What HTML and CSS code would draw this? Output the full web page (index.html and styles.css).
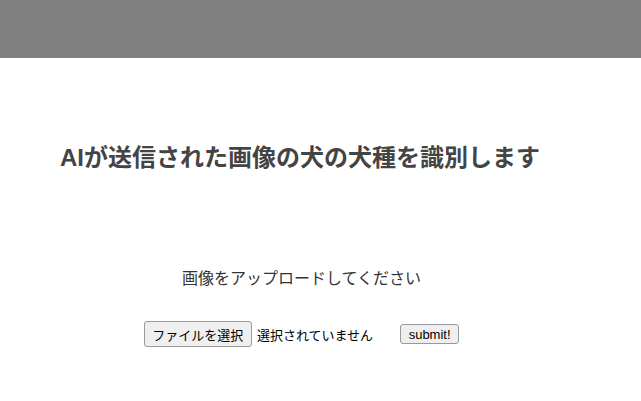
FILE: index.html
```html
<!DOCTYPE html>
<html lang="ja">
<head>
    <meta charset="utf-8">
    <link rel="stylesheet" href="styles.css">
    <title>犬種識別</title>
</head>
<body>
<div class="header"></div>
<div class="main">
    <h1 class="title">AIが送信された画像の犬の犬種を識別します</h1>
    <p class="lead">画像をアップロードしてください</p>
    <form class="upload-form" onsubmit="return false">
        <label class="file-pick">
            <span class="file-button">ファイルを選択</span>
            <span class="file-name">選択されていません</span>
        </label>
        <button class="submit-button" type="submit">submit!</button>
    </form>
</div>
</body>
</html>
```

FILE: styles.css
```css
body {
  margin: 0;
  font-family: "Liberation Sans", "Noto Sans CJK JP", sans-serif;
  background-color: #ffffff;
}

.header {
  height: 58px;
  background-color: #808080;
}

.main {
  margin-left: 60px;
  width: 483px;
  text-align: center;
}

.title {
  margin: 85px 0 0 0;
  font-size: 24px;
  line-height: 30px;
  font-weight: bold;
  color: #444444;
  text-align: left;
  white-space: nowrap;
}

.lead {
  margin: 94px 0 0 0;
  font-size: 16px;
  line-height: 24px;
  color: #333333;
}

.upload-form {
  margin-top: 30px;
  display: flex;
  justify-content: center;
  align-items: center;
}

.file-pick {
  display: flex;
  align-items: center;
}

.file-button {
  box-sizing: border-box;
  height: 26px;
  width: 108px;
  display: flex;
  align-items: center;
  justify-content: center;
  font-size: 13px;
  color: #000000;
  background-color: #efefef;
  border: 1px solid #999999;
  border-radius: 3px;
}

.file-name {
  margin-left: 5px;
  margin-right: 27px;
  font-size: 13px;
  color: #000000;
}

.submit-button {
  box-sizing: border-box;
  height: 20px;
  width: 59px;
  padding: 0;
  font-family: "Liberation Sans", sans-serif;
  font-size: 13px;
  color: #000000;
  background-color: #efefef;
  border: 1px solid #999999;
  border-radius: 3px;
}
```
